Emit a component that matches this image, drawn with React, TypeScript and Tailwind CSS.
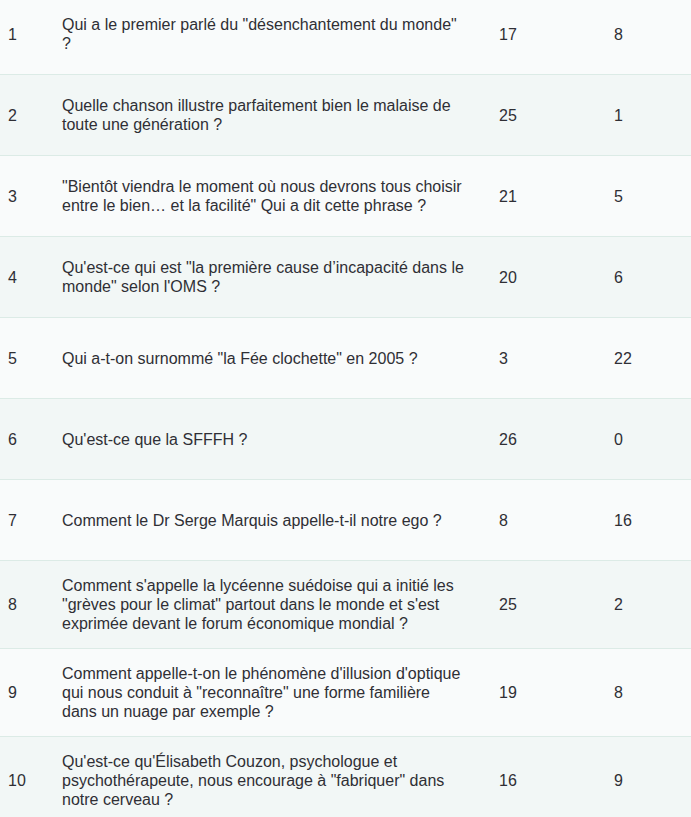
const rows: [string, string, number, number][] = [
  ['1', 'Qui a le premier parlé du "désenchantement du monde" ?', 17, 8],
  ['2', 'Quelle chanson illustre parfaitement bien le malaise de toute une génération ?', 25, 1],
  ['3', '"Bientôt viendra le moment où nous devrons tous choisir entre le bien… et la facilité" Qui a dit cette phrase ?', 21, 5],
  ['4', 'Qu\'est-ce qui est "la première cause d’incapacité dans le monde" selon l\'OMS ?', 20, 6],
  ['5', 'Qui a-t-on surnommé "la Fée clochette" en 2005 ?', 3, 22],
  ['6', "Qu'est-ce que la SFFFH ?", 26, 0],
  ['7', "Comment le Dr Serge Marquis appelle-t-il notre ego ?", 8, 16],
  ['8', 'Comment s\'appelle la lycéenne suédoise qui a initié les "grèves pour le climat" partout dans le monde et s\'est exprimée devant le forum économique mondial ?', 25, 2],
  ['9', 'Comment appelle-t-on le phénomène d\'illusion d\'optique qui nous conduit à "reconnaître" une forme familière dans un nuage par exemple ?', 19, 8],
  ['10', 'Qu\'est-ce qu\'Élisabeth Couzon, psychologue et psychothérapeute, nous encourage à "fabriquer" dans notre cerveau ?', 16, 9],
];

export default function App() {
  return (
    <div className="h-[817px] overflow-hidden bg-[#f9fbfb] font-['Liberation_Sans',Arial,sans-serif] text-[16px] leading-[19px] text-[#2f2f35]">
      <div className="-mt-[6px]">
        {rows.map(([n, q, a, b], i) => (
          <div
            key={n}
            className={`grid min-h-[81px] grid-cols-[54px_437px_115px_1fr] items-center border-b border-[#dcebe6] ${
              i % 2 === 0 ? 'bg-[#f9fbfb]' : 'bg-[#f2f7f6]'
            }`}
          >
            <div className="px-2 py-[15px]">{n}</div>
            <div className="py-[15px] pl-2 pr-[26px]">{q}</div>
            <div className="px-2 py-[15px]">{a}</div>
            <div className="px-2 py-[15px]">{b}</div>
          </div>
        ))}
      </div>
    </div>
  );
}
